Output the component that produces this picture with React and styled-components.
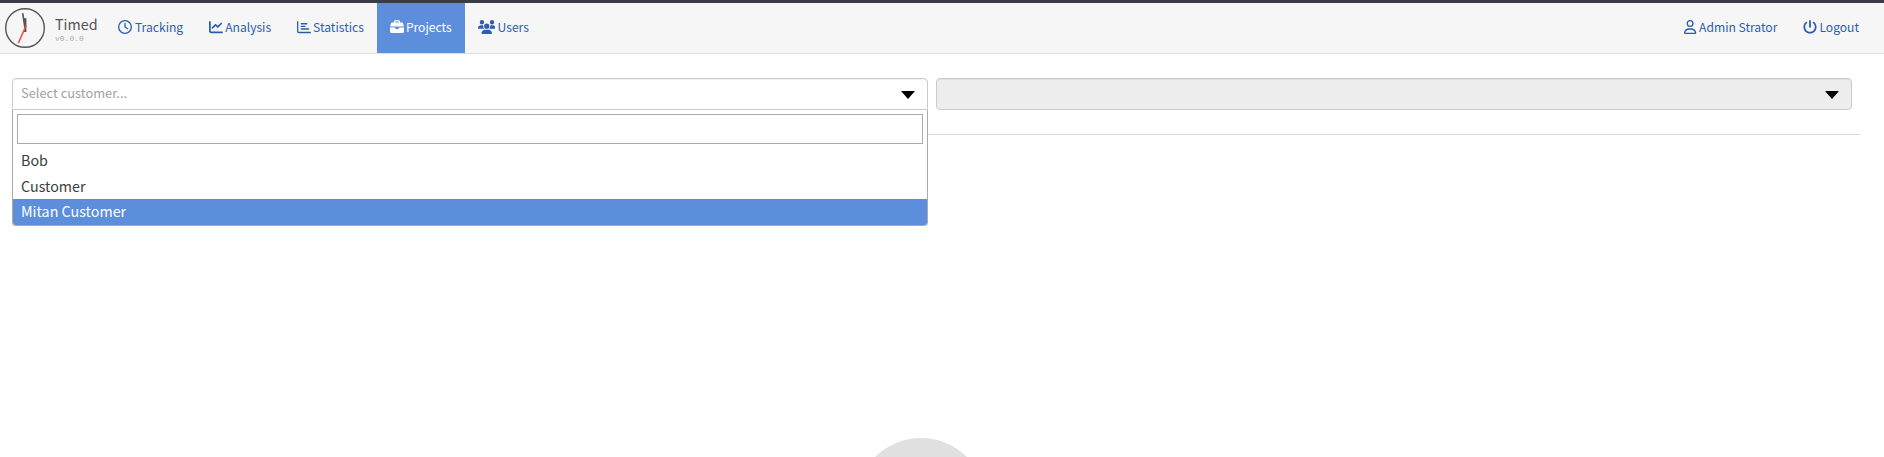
import React from "react";
import styled, { createGlobalStyle } from "styled-components";
import {
  FaRegClock,
  FaChartLine,
  FaRegChartBar,
  FaUsers,
  FaRegUser,
  FaPowerOff,
} from "react-icons/fa6";

const Global = createGlobalStyle`
  * { box-sizing: border-box; }
  body {
    margin: 0;
    background: #fff;
    color: #3b3d42;
    font: 14.3px/25.6px "Noto Sans CJK SC", sans-serif;
    overflow: hidden;
  }
`;

const Page = styled.div`
  height: 457px;
  overflow: hidden;
`;

const Navbar = styled.header`
  display: flex;
  height: 54px;
  background: #f6f6f6;
  border-top: 3px solid #393c44;
  border-bottom: 1px solid #dedede;
`;

const Brand = styled.div`
  display: flex;
  width: 105px;
  padding: 4px 0 0 4px;
  gap: 9px;
`;

const BrandText = styled.div`
  padding-top: 8px;
  color: #555;
`;

const BrandName = styled.div`
  font-size: 14.3px;
  line-height: 18px;
`;

const Version = styled.div`
  margin-top: 1px;
  font: 8px/9px "Liberation Mono", monospace;
  color: #aaa;
`;

const NavItem = styled.a`
  display: flex;
  align-items: center;
  gap: ${(p) => p.$gap ?? 2}px;
  padding: 0 13px 2px;
  height: 50px;
  font-size: 12.1px;
  white-space: nowrap;
  color: ${(p) => (p.$active ? "#fff" : "#2a5eb0")};
  background: ${(p) => (p.$active ? "#5c8edc" : "transparent")};

  svg {
    height: 14px;
    width: ${(p) => p.$icon ?? 14}px;
    flex: none;
  }
`;

const Spacer = styled.div`
  flex: 1;
`;

const UserNav = styled.nav`
  display: flex;
  padding-right: 12px;
`;

const Content = styled.main`
  padding: 24px 24px 0 12px;
`;

const Filters = styled.div`
  display: flex;
  gap: 8px;
  padding: 0 8px 24px 0;
  border-bottom: 1px solid #dcdcdc;
`;

const SelectWrap = styled.div`
  position: relative;
  flex: 1;
`;

const Trigger = styled.div`
  display: flex;
  align-items: center;
  justify-content: space-between;
  height: 32px;
  padding: 1px 12px 0 8px;
  border: 1px solid #ccc;
  border-radius: ${(p) => (p.$open ? "4px 4px 0 0" : "4px")};
  background: ${(p) => (p.$disabled ? "#ededed" : "#fff")};
  box-shadow: inset 0 1px 1px rgba(0, 0, 0, 0.06);
  color: #a0a0a0;
  font-size: 12.85px;
`;

const Label = styled.span`
  margin-top: -4px;
`;

const Caret = styled.i`
  margin-top: 1px;
  border: 7px solid transparent;
  border-top: 8px solid #000;
  border-bottom: 0;
`;

const Menu = styled.div`
  position: absolute;
  top: 32px;
  left: 0;
  right: 0;
  height: 116px;
  border: 1px solid #aaa;
  border-top: 0;
  border-radius: 0 0 4px 4px;
  background: #fff;
  overflow: hidden;
`;

const Search = styled.input`
  display: block;
  width: calc(100% - 8px);
  height: 30px;
  margin: 4px 4px 3px;
  border: 1px solid #aaa;
  outline: none;
`;

const Option = styled.div`
  height: 26px;
  padding-left: 8px;
  line-height: ${(p) => (p.$active ? 23 : 25)}px;
  color: ${(p) => (p.$active ? "#fff" : "#3b3d42")};
  background: ${(p) => (p.$active ? "#5c8edc" : "transparent")};
`;

const Placeholder = styled.div`
  width: 130px;
  height: 130px;
  margin: 303px auto 0;
  border-radius: 50%;
  background: #e0e0e0;
  transform: translateX(-15px);
`;

const Logo = () => (
  <svg width="42" height="42" viewBox="0 0 42 42" fill="none">
    <circle cx="21" cy="21" r="19.3" stroke="#555" strokeWidth="1.4" />
    <path d="M21.2 25V11.2" stroke="#555" strokeWidth="2.4" />
    <path d="M21.4 24L18.7 6.2" stroke="#555" strokeWidth="1.6" />
    <path d="M22.3 18L14.4 36" stroke="#e8504a" strokeWidth="1.6" />
  </svg>
);

const Briefcase = () => (
  <svg viewBox="0 0 14 14" fill="currentColor">
    <path d="M4.6 3V1.6Q4.6 .8 5.4 .8H8.6Q9.4 .8 9.4 1.6V3" fill="none" stroke="currentColor" strokeWidth="1.3" />
    <path d="M2.3 2.6H11.7Q12.9 2.6 13.2 3.7L13.8 6.6H.2L.8 3.7Q1.1 2.6 2.3 2.6Z" />
    <path d="M0 7.4H5.1V8.1Q5.1 9 6 9H8Q8.9 9 8.9 8.1V7.4H14V11.4Q14 13 12.4 13H1.6Q0 13 0 11.4Z" />
  </svg>
);

export default function App() {
  return (
    <Page>
      <Global />
      <Navbar>
        <Brand>
          <Logo />
          <BrandText>
            <BrandName>Timed</BrandName>
            <Version>v0.0.0</Version>
          </BrandText>
        </Brand>
        <NavItem $gap={3}><FaRegClock />Tracking</NavItem>
        <NavItem><FaChartLine />Analysis</NavItem>
        <NavItem><FaRegChartBar />Statistics</NavItem>
        <NavItem $active><Briefcase />Projects</NavItem>
        <NavItem $icon={17.5} $gap={2.5}><FaUsers />Users</NavItem>
        <Spacer />
        <UserNav>
          <NavItem $icon={12.25} $gap={2.5}><FaRegUser />Admin Strator</NavItem>
          <NavItem $gap={2}><FaPowerOff />Logout</NavItem>
        </UserNav>
      </Navbar>
      <Content>
        <Filters>
          <SelectWrap>
            <Trigger $open>
              <Label>Select customer...</Label>
              <Caret />
            </Trigger>
            <Menu>
              <Search />
              <Option>Bob</Option>
              <Option>Customer</Option>
              <Option $active>Mitan Customer</Option>
            </Menu>
          </SelectWrap>
          <SelectWrap>
            <Trigger $disabled>
              <Label />
              <Caret />
            </Trigger>
          </SelectWrap>
        </Filters>
        <Placeholder />
      </Content>
    </Page>
  );
}
